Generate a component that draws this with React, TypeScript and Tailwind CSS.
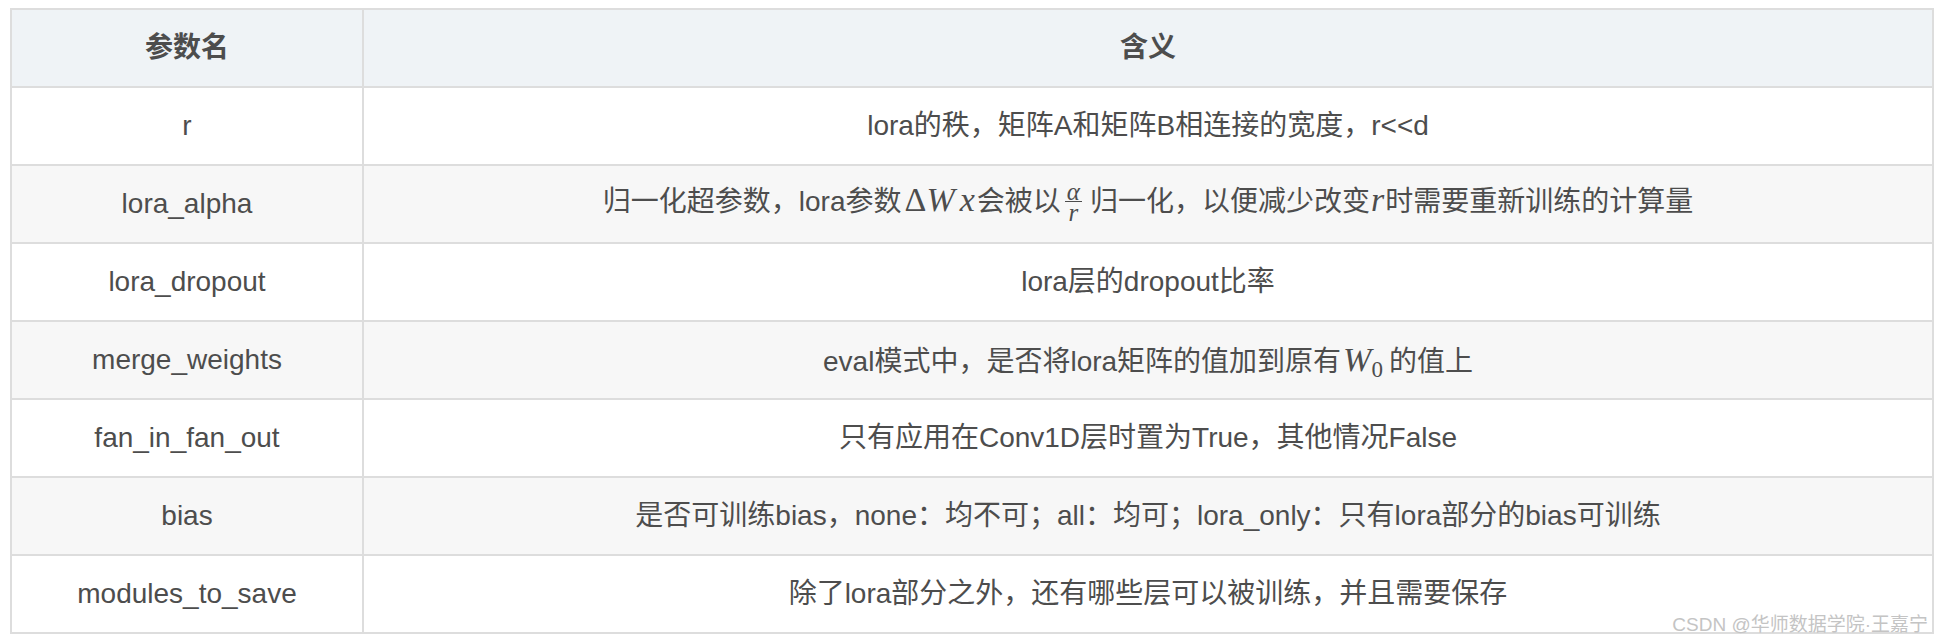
import React from 'react';

const mathFont = "font-['Liberation_Serif','DejaVu_Serif',serif]";

// inline math bits rendered like KaTeX
const DeltaWx = () => (
  <span className={`${mathFont} text-[34px] leading-none ml-[3px] mr-[2px]`}>
    Δ<i className="tracking-[1px]">W</i>
    <i className="ml-[4px]">x</i>
  </span>
);

const AlphaOverR = () => (
  <span className={`${mathFont} inline-flex flex-col items-center align-middle ml-[4px] mr-[8px] text-[25px] -translate-y-[2px]`}>
    <i className="block leading-[19px] px-[2px] border-b border-[#4d4d4d]">α</i>
    <i className="block leading-[21px]">r</i>
  </span>
);

const R = () => <i className={`${mathFont} text-[34px] leading-none mx-[1px]`}>r</i>;

const W0 = () => (
  <span className={`${mathFont} text-[34px] leading-none ml-[2px] mr-[6px]`}>
    <i>W</i>
    <sub className="text-[23px] not-italic">0</sub>
  </span>
);

const rows: { name: string; desc: React.ReactNode }[] = [
  { name: 'r', desc: 'lora的秩，矩阵A和矩阵B相连接的宽度，r<<d' },
  {
    name: 'lora_alpha',
    desc: (
      <>
        归一化超参数，lora参数<DeltaWx />会被以<AlphaOverR />归一化，以便减少改变<R />时需要重新训练的计算量
      </>
    ),
  },
  { name: 'lora_dropout', desc: 'lora层的dropout比率' },
  {
    name: 'merge_weights',
    desc: (
      <>
        eval模式中，是否将lora矩阵的值加到原有<W0 />的值上
      </>
    ),
  },
  { name: 'fan_in_fan_out', desc: '只有应用在Conv1D层时置为True，其他情况False' },
  { name: 'bias', desc: '是否可训练bias，none：均不可；all：均可；lora_only：只有lora部分的bias可训练' },
  { name: 'modules_to_save', desc: '除了lora部分之外，还有哪些层可以被训练，并且需要保存' },
];

export default function App() {
  return (
    <div className="relative w-[1942px] h-[644px] bg-white pt-[8px] pl-[10px] font-['Liberation_Sans','Noto_Sans_CJK_SC',sans-serif] text-[#4d4d4d]">
      <table className="w-[1924px] table-fixed border-collapse border-2 border-[#dddddd]">
        <colgroup>
          <col className="w-[352px]" />
          <col />
        </colgroup>
        <thead>
          <tr className="bg-[#eff3f6]">
            <th className="h-[78px] border-2 border-[#dddddd] text-[28px] font-bold text-center">参数名</th>
            <th className="h-[78px] border-2 border-[#dddddd] text-[28px] font-bold text-center">含义</th>
          </tr>
        </thead>
        <tbody>
          {rows.map((row, i) => (
            <tr key={row.name} className={i % 2 === 1 ? 'bg-[#f7f7f7]' : 'bg-white'}>
              <td className="h-[78px] border-2 border-[#dddddd] text-center text-[28px] leading-none">{row.name}</td>
              <td className="h-[78px] border-2 border-[#dddddd] text-center text-[28px] leading-none">{row.desc}</td>
            </tr>
          ))}
        </tbody>
      </table>
      <div className="absolute right-[14px] bottom-[10px] text-[19px] leading-none text-[#c4c4c4]">
        CSDN @华师数据学院·王嘉宁
      </div>
    </div>
  );
}
